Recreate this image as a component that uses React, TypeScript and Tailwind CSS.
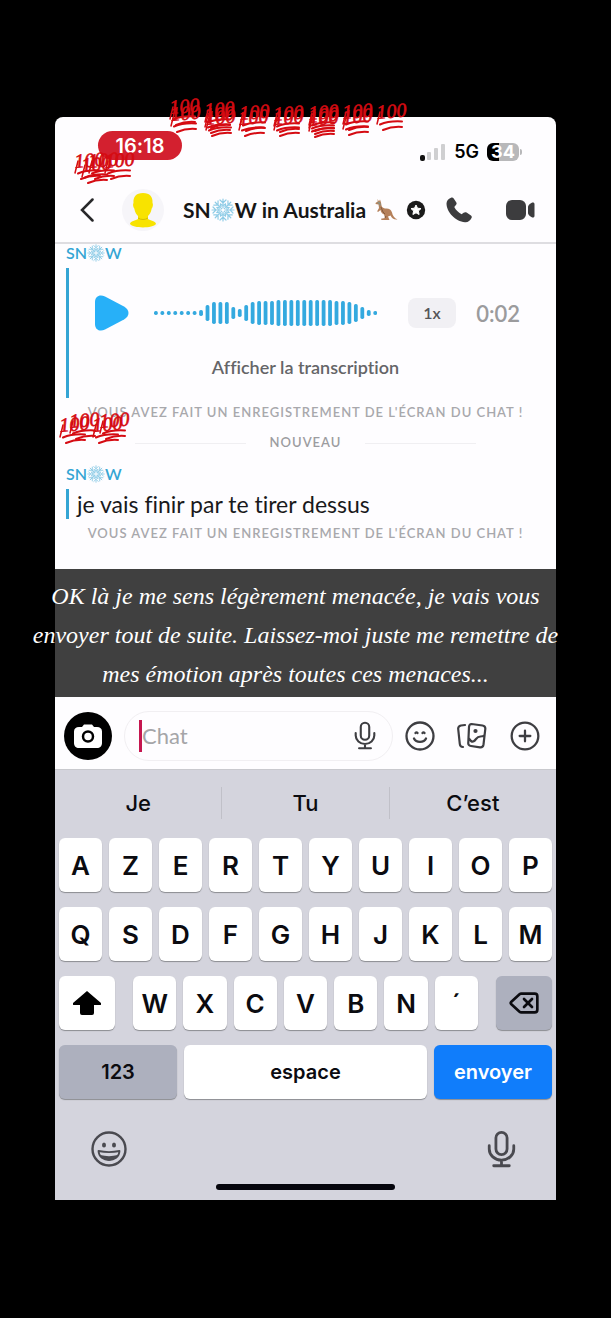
import { ReactNode } from 'react'
import { CirclePlus, Delete } from 'lucide-react'

const WAVE = [
  4, 4, 4, 4, 4, 4, 4, 6, 16, 22, 22, 22, 12, 8, 16, 22, 24, 24, 24, 26, 26, 26, 26, 26, 26, 26, 26, 26, 24, 24, 22, 18,
  12, 6, 4
]

// position of every sticker, relative to the phone screen
const STICKERS = [
  [113, -27], [114, -20],
  [148, -24], [148, -19], [149, -16],
  [183, -21], [182, -16],
  [217, -20], [217, -16],
  [252, -21], [252, -18], [252, -15],
  [286, -22], [286, -17],
  [320, -22],
  [18, 27], [32, 27], [48, 27], [25, 31],
  [3, 291], [13, 287], [36, 291], [43, 287]
]

const ROWS = ['AZERTYUIOP', 'QSDFGHJKLM']

function Hundred({ x, y }: { x: number; y: number }) {
  return (
    <svg
      viewBox="0 0 40 40"
      className="absolute h-10 w-10 overflow-visible text-[#d50b12]"
      style={{ left: x, top: y }}
      aria-hidden="true"
    >
      <text
        x="2"
        y="24"
        transform="rotate(-5 2 24)"
        fill="currentColor"
        stroke="currentColor"
        strokeWidth="0.600"
        className="font-['Liberation_Serif',serif] text-[20px] italic"
      >
        100
      </text>
      <path
        d="M5 29.500C11 27 19 26 27 26.500M8 35C14 32.500 21 31.500 27 32"
        fill="none"
        stroke="currentColor"
        strokeWidth="2"
        strokeLinecap="round"
      />
      <path d="M5 17 2 29" fill="none" stroke="currentColor" strokeWidth="1.500" strokeLinecap="round" />
    </svg>
  )
}

function Snowflake({ className }: { className: string }) {
  return (
    <svg viewBox="0 0 24 24" className={className} aria-hidden="true">
      <g fill="none" stroke="#8fcce6" strokeWidth="1.200" strokeLinecap="round">
        {[0, 45, 90, 135, 180, 225, 270, 315].map((a) => (
          <path key={a} transform={`rotate(${a} 12 12)`} d="M12 10V1M9 2l3 3 3-3M9.500 6l2.500 2 2.500-2" />
        ))}
        <circle cx="12" cy="12" r="4" stroke="#a9d9ee" />
      </g>
    </svg>
  )
}

function Kangaroo() {
  return (
    <svg viewBox="0 0 24 24" className="h-6 w-6" aria-hidden="true">
      <path
        d="M3.500 1 5 3.500 6 1.500l1 3 .500 3C8 9.500 9 10 11 10.500c4-.500 6 1 7 4 .700 3 2 5.500 5.500 7-3.500.500-5.500-1-7-4L14 18.500l1.500 3.500H7.500l-.500-1.200 4-.800-1-3.500c-2-1-3-2.500-3.500-4.500L4 14l-.800-.800L5 10 4.500 6.500 1.500 6 1.800 4.800 3.800 3.500Z"
        fill="#b5805a"
      />
      <path d="M7 9l2 5 2 2M12 18l-1 2" fill="none" stroke="#815b40" strokeWidth="1" />
      <path d="M3.500 4.500 5.500 5l.800 2.500" fill="none" stroke="#8d9180" strokeWidth="1.500" />
    </svg>
  )
}

function MicIcon({ className }: { className: string }) {
  return (
    <svg viewBox="0 0 26 34" className={className} fill="none" stroke="currentColor" strokeWidth="2.500" strokeLinecap="round" aria-hidden="true">
      <rect x="8" y="2" width="10" height="20" rx="5" />
      <path d="M2 14v3a11 10 0 0 0 22 0v-3M13 27v5M6 32h14" />
    </svg>
  )
}

function SenderName() {
  return (
    <div className="flex h-[18px] items-center pl-[11px] text-base font-semibold text-[#35a5d4]">
      SN
      <Snowflake className="h-[18px] w-[18px]" />W
    </div>
  )
}

function Notice() {
  return (
    <p className="text-center text-[13px] leading-5 font-semibold tracking-[1px] whitespace-nowrap text-[#a8a8ac]">
      VOUS AVEZ FAIT UN ENREGISTREMENT DE L'ÉCRAN DU CHAT !
    </p>
  )
}

function Key({ children, className = 'flex-1 bg-white text-[26px]', label }: { children: ReactNode; className?: string; label?: string }) {
  return (
    <button
      aria-label={label}
      className={`flex h-[54px] min-w-0 items-center justify-center rounded-md font-semibold shadow-[0_1px_1px_#8b8c91] ${className}`}
    >
      {children}
    </button>
  )
}

function Header() {
  return (
    <header className="border-b-2 border-[#dedde1]">
      <div className="flex h-[61px] items-center justify-between pr-[34px] pl-[43px] font-['Inter',sans-serif] font-semibold">
        <div className="mt-[-4px] flex h-[29px] w-[84px] items-center justify-center rounded-full bg-[#d3202f] text-xl text-white">
          16:18
        </div>
        <div className="mt-2 flex items-center gap-2">
          <svg viewBox="0 0 26 18" className="h-[18px] w-[26px]" aria-hidden="true">
            <rect x="0" y="12" width="5" height="6" rx="2" fill="#111" />
            <rect x="7" y="9" width="4" height="8" rx="1" fill="#cfcfd1" />
            <rect x="14" y="5" width="4" height="12" rx="1" fill="#cfcfd1" />
            <rect x="21" y="1" width="4" height="16" rx="1" fill="#cfcfd1" />
          </svg>
          <span className="text-lg leading-5">5G</span>
          <div className="flex items-center gap-px">
            <div className="flex h-[18px] w-8 items-center justify-center rounded-md bg-linear-to-r from-black from-37% to-[#b8b8ba] to-37% text-lg font-bold text-white">
              34
            </div>
            <div className="h-1.5 w-0.5 rounded-r bg-[#b8b8ba]" />
          </div>
        </div>
      </div>
      <div className="flex h-16 items-center pr-5 pl-[25px]">
        <button aria-label="Retour">
          <svg viewBox="0 0 14 24" className="h-6 w-3.5" fill="none" stroke="#28282a" strokeWidth="2.500" strokeLinecap="round" aria-hidden="true">
            <path d="M12.500 1.500 2 12l10.500 10.500" />
          </svg>
        </button>
        <svg viewBox="0 0 42 42" className="ml-7 h-[42px] w-[42px]" aria-hidden="true">
          <circle cx="21" cy="21" r="21" fill="#f6f5f9" />
          <path
            d="M21 4c7 0 10 4 9.500 10 .800 1 .500 4-.800 5.500-.700 4-2.200 6-3.700 7.500v3c2 1.500 8 2 8 5-3 4.500-23 4.500-26 0 0-3 6-3.500 8-5v-3c-1.500-1.500-3-3.500-3.700-7.500C11 18 10.700 15 11.500 14 11 8 14 4 21 4Z"
            fill="#f8e300"
          />
          <path d="M16 29c3 2 7 2 10 0" fill="none" stroke="#d4bd00" strokeWidth="1" />
        </svg>
        <h1 className="ml-[19px] flex flex-1 items-center text-[21px] font-bold whitespace-nowrap text-[#161616]">
          SN
          <Snowflake className="h-6 w-6" />W in Australia
          <span className="ml-2">
            <Kangaroo />
          </span>
          <svg viewBox="0 0 20 20" className="ml-2 h-5 w-5" aria-hidden="true">
            <circle cx="10" cy="10" r="9.200" fill="#1b1b1b" />
            <path
              d="m10 5 1.500 3.200 3.500.400-2.600 2.400.700 3.500L10 12.800l-3.100 1.700.700-3.500L5 8.600l3.500-.400Z"
              fill="#fff"
              stroke="#fff"
              strokeWidth="1"
              strokeLinejoin="round"
            />
          </svg>
        </h1>
        <button aria-label="Appel audio">
          <svg viewBox="0 0 26 26" className="h-[26px] w-[26px]" fill="#3c3c3e" aria-hidden="true">
            <path d="M5 .800c1-.600 2-.300 2.700.700l2.500 3.800c.700 1 .500 2-.300 2.800L8.300 10c1.500 3 4 5.500 7.300 7.300l2-1.500c1-.800 2-.800 3-.200l4 2.600c1.200.800 1.500 1.800.900 2.900-1.300 2.600-3.700 4.500-6.500 4.200C9.500 24.500.500 15 .500 6.500.500 4 2.300 2 5 .800Z" />
          </svg>
        </button>
        <button className="ml-[34px]" aria-label="Appel vidéo">
          <svg viewBox="0 0 30 22" className="h-[22px] w-[30px]" fill="#3c3c3e" aria-hidden="true">
            <rect x="0" y="1" width="20" height="20" rx="6" />
            <path d="M22 8c0-2 3-4.500 5-4.500.800 0 1.500.600 1.500 1.500v12c0 .900-.700 1.500-1.500 1.500-2 0-5-2.500-5-4.500Z" />
          </svg>
        </button>
      </div>
    </header>
  )
}

function VoiceMessage() {
  return (
    <div className="mt-1.5 ml-[11px] flex h-[130px] flex-col border-l-[3px] border-[#35a5d4] pt-[27px]">
      <div className="flex h-9 items-center pr-9 pl-[26px]">
        <button aria-label="Lire">
          <svg viewBox="0 0 34 36" className="h-9 w-[34px]" fill="#27b0f8" aria-hidden="true">
            <path d="M0 7C0 1 5-1 10 1.500l19 10c6 3.500 6 9.500 0 13l-19 10C5 37 0 35 0 29Z" />
          </svg>
        </button>
        <svg viewBox="0 0 224 28" className="ml-6 h-7 w-[224px]" aria-hidden="true">
          {WAVE.map((h, i) => (
            <rect key={i} x={1 + i * 6.45} y={14 - h / 2} width="3.800" height={h} rx="1.700" fill="#34a9df" />
          ))}
        </svg>
        <button className="ml-[31px] h-[30px] w-12 rounded-lg bg-[#f1f0f4] text-base font-semibold text-[#555558]">1x</button>
        <span className="ml-auto text-[22px] font-semibold text-[#9b9b9d]">0:02</span>
      </div>
      <button className="mt-[22px] mr-3.5 self-center text-lg leading-7 font-semibold text-[#656568]">
        Afficher la transcription
      </button>
    </div>
  )
}

function Composer() {
  return (
    <div className="flex h-[73px] items-center border-b border-[#c9c9ce] pt-[5px] pr-[15px] pl-[9px] text-[#3e3e42]">
      <button className="flex h-12 w-12 items-center justify-center rounded-full bg-black" aria-label="Appareil photo">
        <svg viewBox="0 0 28 24" className="h-6 w-7" aria-hidden="true">
          <path d="M5 3h3l2-2.500h8L20 3h3c3 0 5 1.500 5 4.500V19c0 3-2 5-5 5H5c-3 0-5-2-5-5V7.500C0 4.500 2 3 5 3Z" fill="#fff" />
          <circle cx="14" cy="12.500" r="5" fill="none" stroke="#000" strokeWidth="2.500" />
        </svg>
      </button>
      <div className="mx-3 flex h-[50px] min-w-0 flex-1 items-center rounded-full border border-[#f1eff2] pr-4 pl-3.5">
        <span className="h-8 w-[3px] shrink-0 bg-[#c5164f]" />
        <input className="min-w-0 flex-1 text-[22px] outline-none placeholder:text-[#a5a5a8]" placeholder="Chat" aria-label="Chat" />
        <button aria-label="Message vocal">
          <MicIcon className="h-[29px] w-[22px]" />
        </button>
      </div>
      <div className="flex items-center gap-[22px]">
        <button aria-label="Stickers">
          <svg viewBox="0 0 30 30" className="h-[30px] w-[30px]" fill="none" stroke="currentColor" strokeWidth="2.300" strokeLinecap="round" aria-hidden="true">
            <circle cx="15" cy="15" r="13.500" />
            <path d="M9 17.500c2 4.500 10 4.500 12 0M10.500 12q1-1.200 2 0M17.500 12q1-1.200 2 0" />
          </svg>
        </button>
        <button aria-label="Souvenirs">
          <svg viewBox="0 0 30 28" className="h-7 w-[30px]" fill="none" stroke="currentColor" strokeWidth="2.200" strokeLinecap="round" strokeLinejoin="round" aria-hidden="true">
            <path d="M8 3 4 3.500C2 4 1 5 1.200 7l1.600 15c.200 2 1.200 3 3.200 3M14.500 2l11 1.500c2 .300 3 1.500 2.800 3.500L26.500 22.500c-.300 2-1.500 3-3.500 2.800l-9-1.300c-2-.300-3-1.500-2.700-3.500L12 5c.200-2 .700-3 2.500-3ZM11.500 16l2.500 3c2 1.500 3.500 0 5-2s3-2.500 4.500-2.500 3 0 4-1.500" />
            <circle cx="18.500" cy="9" r="1" fill="currentColor" />
          </svg>
        </button>
        <button aria-label="Plus">
          <CirclePlus className="h-8 w-8" strokeWidth={1.7} />
        </button>
      </div>
    </div>
  )
}

function Keyboard() {
  return (
    <div className="bg-[#d4d4dd] pb-2.5 font-['Inter',sans-serif] text-[#0b0b10]">
      <div className="flex h-[68px] items-center divide-x divide-[#c0c0c8] pb-0.5 text-[22px] font-medium">
        {['Je', 'Tu', 'C’est'].map((word) => (
          <button key={word} className="h-8 flex-1">
            {word}
          </button>
        ))}
      </div>
      <div className="flex flex-col gap-[15px] px-1">
        {ROWS.map((row) => (
          <div key={row} className="flex gap-[7px]">
            {row.split('').map((letter) => (
              <Key key={letter}>{letter}</Key>
            ))}
          </div>
        ))}
        <div className="flex gap-[18px]">
          <Key className="w-14 bg-white" label="Majuscule">
            <svg viewBox="0 0 28 24" className="h-6 w-7" aria-hidden="true">
              <path d="M14 0 28 12c1 1 0 2-1 2h-6v8q0 2-2 2H9q-2 0-2-2v-8H1c-1 0-2-1-1-2Z" />
            </svg>
          </Key>
          <div className="flex min-w-0 flex-1 gap-[7px]">
            {'WXCVBN´'.split('').map((letter) => (
              <Key key={letter}>{letter}</Key>
            ))}
          </div>
          <Key className="w-14 bg-[#adb0be]" label="Supprimer">
            <Delete className="h-8 w-8" strokeWidth={2} />
          </Key>
        </div>
        <div className="flex gap-[7px] text-xl">
          <Key className="w-[118px] bg-[#adb0be] font-medium">123</Key>
          <Key className="flex-1 bg-white font-medium">espace</Key>
          <Key className="w-[118px] bg-[#107dfb] font-medium text-white">envoyer</Key>
        </div>
      </div>
      <div className="flex h-[85px] items-center justify-between pt-3.5 pr-10 pl-9 text-[#4a4a50]">
        <button aria-label="Emoji">
          <svg viewBox="0 0 36 36" className="h-9 w-9" fill="none" stroke="currentColor" strokeWidth="2.400" aria-hidden="true">
            <circle cx="18" cy="18" r="16.500" />
            <ellipse cx="13" cy="14" rx="2" ry="2.500" fill="currentColor" stroke="none" />
            <ellipse cx="23" cy="14" rx="2" ry="2.500" fill="currentColor" stroke="none" />
            <path d="M7.500 20c7 1.500 14 1.500 21 0-.500 12-20.500 12-21 0Z" strokeWidth="1.800" strokeLinejoin="round" />
            <path d="M9 24c6 1.500 12 1.500 18 0-3 7-15 7-18 0Z" fill="currentColor" stroke="none" />
          </svg>
        </button>
        <button aria-label="Dictée">
          <MicIcon className="h-[38px] w-[29px]" />
        </button>
      </div>
      <div className="mx-auto h-1.5 w-[179px] rounded-full bg-[#05050c]" />
    </div>
  )
}

export default function App() {
  return (
    <div className="min-h-screen bg-black px-[55px] pt-[117px] pb-[118px] font-['Lato',sans-serif] [font-variant-ligatures:none]">
      <main className="relative rounded-t-lg bg-[#fefdff]">
        <Header />

        {/* Messages */}
        <section className="pb-[26px]">
          <SenderName />
          <VoiceMessage />
          <div className="mt-1">
            <Notice />
          </div>
          <div className="mt-[11px] flex h-5 items-center justify-center gap-6 px-20">
            <div className="h-px flex-1 bg-[#f0eff2]" />
            <span className="text-[13px] font-semibold tracking-[1px] text-[#9c9ca0]">NOUVEAU</span>
            <div className="h-px flex-1 bg-[#f0eff2]" />
          </div>
          <div className="mt-3">
            <SenderName />
          </div>
          <p className="mt-1.5 ml-[11px] border-l-[3px] border-[#35a5d4] pl-2 text-[23px] leading-[30px] text-[#19191b]">
            je vais finir par te tirer dessus
          </p>
          <div className="mt-1">
            <Notice />
          </div>
        </section>

        {/* Caption over the recording */}
        <div className="bg-[#404040] pt-2 pb-[3px]">
          <p className="-mr-1 -ml-6 text-center font-['Liberation_Serif',serif] text-2xl leading-[39px] whitespace-nowrap text-white italic">
            OK là je me sens légèrement menacée, je vais vous
            <br />
            envoyer tout de suite. Laissez-moi juste me remettre de
            <br />
            mes émotion après toutes ces menaces...
          </p>
        </div>

        <Composer />
        <Keyboard />

        {STICKERS.map(([x, y], i) => (
          <Hundred key={i} x={x} y={y} />
        ))}
      </main>
    </div>
  )
}
